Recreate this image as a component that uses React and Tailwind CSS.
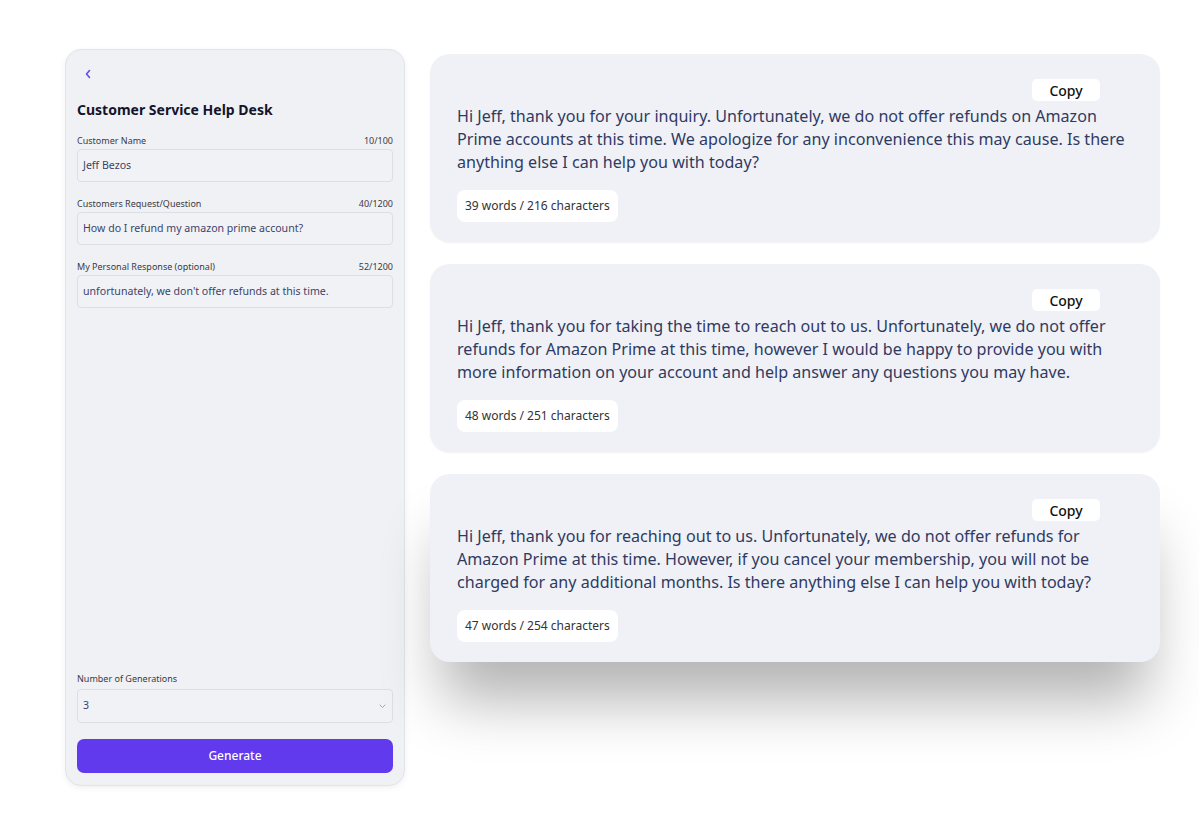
import React from "react";

const font = { fontFamily: '"Noto Sans", "Open Sans", sans-serif' };

function Field({ label, count, value }) {
  return (
    <div className="flex flex-col">
      <div className="flex items-center justify-between h-[12px] text-[9px] leading-[12px] text-[#3a3a44]">
        <span>{label}</span>
        <span>{count}</span>
      </div>
      <div className="mt-[2px] h-[33px] rounded-[4px] border border-[#dcdee4] bg-[#f1f2f6] px-[5px] flex items-center text-[10.6px] text-[#3b4468]">
        {value}
      </div>
    </div>
  );
}

function Card({ text, count, shadow }) {
  return (
    <div
      className={
        "w-[730px] h-[188px] rounded-[20px] bg-[#f0f1f6] pl-[27px] pr-[30px] pt-[25px] flex flex-col " +
        (shadow
          ? "shadow-[0_50px_60px_-12px_rgba(0,0,0,0.3)]"
          : "shadow-[0_1px_2px_rgba(0,0,0,0.06)]")
      }
    >
      <div className="flex justify-end pr-[30px]">
        <div className="w-[68px] h-[22px] rounded-[5px] bg-white flex items-center justify-center text-[14px] font-medium text-[#111]">
          Copy
        </div>
      </div>
      <p className="mt-[4px] w-[672px] text-[16.1px] leading-[23px] text-[#2f3a62]">{text}</p>
      <div className="mt-auto mb-[20px] self-start h-[32px] rounded-[8px] bg-white px-[8px] flex items-center text-[12px] text-[#333]">
        {count}
      </div>
    </div>
  );
}

export default function App() {
  return (
    <div className="w-[1199px] h-[835px] bg-white flex items-start pl-[65px] pt-[49px] gap-[25px]" style={font}>
      <div className="w-[340px] h-[737px] rounded-[16px] border border-[#e3e4ea] bg-[#f0f1f5] shadow-[0_2px_6px_rgba(0,0,0,0.06)] px-[11px] pt-[17px] pb-[12px] flex flex-col">
        <div className="h-[14px] pl-[7px] flex items-center">
          <svg width="8" height="10" viewBox="0 0 8 10" fill="none">
            <path d="M5.5 1.5 L2.5 5 L5.5 8.5" stroke="#6a45f0" strokeWidth="1.6" strokeLinecap="round" strokeLinejoin="round" />
          </svg>
        </div>
        <h1 className="mt-[19px] h-[20px] leading-[20px] text-[14px] font-bold text-[#14142b]">Customer Service Help Desk</h1>
        <div className="mt-[15px] flex flex-col gap-[16px]">
          <Field label="Customer Name" count="10/100" value="Jeff Bezos" />
          <Field label="Customers Request/Question" count="40/1200" value="How do I refund my amazon prime account?" />
          <Field label="My Personal Response (optional)" count="52/1200" value="unfortunately, we don't offer refunds at this time." />
        </div>
        <div className="flex-1" />
        <div className="h-[12px] text-[9px] leading-[12px] text-[#3a3a44]">Number of Generations</div>
        <div className="mt-[4px] h-[34px] rounded-[4px] border border-[#dcdee4] bg-[#f1f2f6] pl-[5px] pr-[6px] flex items-center justify-between text-[10.6px] text-[#3b4468]">
          <span>3</span>
          <svg width="7" height="5" viewBox="0 0 7 5" fill="none">
            <path d="M1 1 L3.5 3.5 L6 1" stroke="#a0a3ad" strokeWidth="1" strokeLinecap="round" />
          </svg>
        </div>
        <button className="mt-[16px] h-[34px] rounded-[7px] bg-[#603aec] text-white text-[12px] font-medium flex items-center justify-center">
          Generate
        </button>
      </div>
      <div className="mt-[5px] flex flex-col gap-[22px]">
        <Card
          text="Hi Jeff, thank you for your inquiry. Unfortunately, we do not offer refunds on Amazon Prime accounts at this time. We apologize for any inconvenience this may cause. Is there anything else I can help you with today?"
          count="39 words / 216 characters"
        />
        <Card
          text="Hi Jeff, thank you for taking the time to reach out to us. Unfortunately, we do not offer refunds for Amazon Prime at this time, however I would be happy to provide you with more information on your account and help answer any questions you may have."
          count="48 words / 251 characters"
        />
        <Card
          text="Hi Jeff, thank you for reaching out to us. Unfortunately, we do not offer refunds for Amazon Prime at this time. However, if you cancel your membership, you will not be charged for any additional months. Is there anything else I can help you with today?"
          count="47 words / 254 characters"
          shadow
        />
      </div>
    </div>
  );
}
